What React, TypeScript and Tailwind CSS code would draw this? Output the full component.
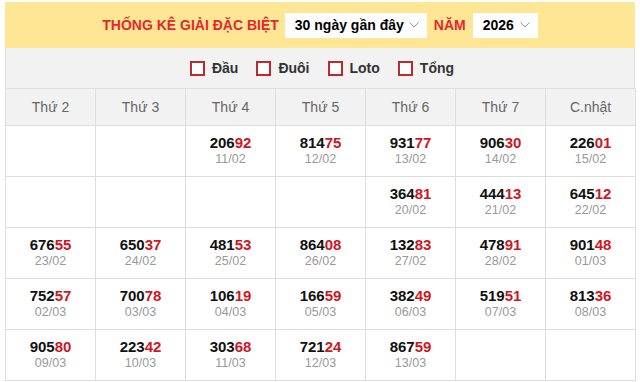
import React from 'react';

interface Prize {
  num: string;
  date: string;
}

const days = ['Thứ 2', 'Thứ 3', 'Thứ 4', 'Thứ 5', 'Thứ 6', 'Thứ 7', 'C.nhật'];

const rows: (Prize | null)[][] = [
  [null, null, { num: '20692', date: '11/02' }, { num: '81475', date: '12/02' }, { num: '93177', date: '13/02' }, { num: '90630', date: '14/02' }, { num: '22601', date: '15/02' }],
  [null, null, null, null, { num: '36481', date: '20/02' }, { num: '44413', date: '21/02' }, { num: '64512', date: '22/02' }],
  [{ num: '67655', date: '23/02' }, { num: '65037', date: '24/02' }, { num: '48153', date: '25/02' }, { num: '86408', date: '26/02' }, { num: '13283', date: '27/02' }, { num: '47891', date: '28/02' }, { num: '90148', date: '01/03' }],
  [{ num: '75257', date: '02/03' }, { num: '70078', date: '03/03' }, { num: '10619', date: '04/03' }, { num: '16659', date: '05/03' }, { num: '38249', date: '06/03' }, { num: '51951', date: '07/03' }, { num: '81336', date: '08/03' }],
  [{ num: '90580', date: '09/03' }, { num: '22342', date: '10/03' }, { num: '30368', date: '11/03' }, { num: '72124', date: '12/03' }, { num: '86759', date: '13/03' }, null, null],
];

const Chevron: React.FC = () => (
  <svg width="10" height="6" viewBox="0 0 10 6" className="shrink-0">
    <polyline points="0.5,0.5 5,5 9.5,0.5" fill="none" stroke="#9a9a9a" strokeWidth="1" />
  </svg>
);

const Check: React.FC<{ label: string }> = ({ label }) => (
  <label className="flex items-center gap-[7px]">
    <span className="w-[15px] h-[15px] border-2 border-[#c1272d] bg-white" />
    <span className="text-[14px] font-bold text-[#333]">{label}</span>
  </label>
);

const App: React.FC = () => {
  return (
    <div className="pt-[2px] pl-[5px] font-['Liberation_Sans',Arial,sans-serif] bg-white">
      <div className="w-[630px]">
        <div className="h-[46px] bg-[#fee695] flex items-center justify-center">
          <span className="text-[14px] font-bold text-[#e8262c] mr-[6px]">THỐNG KÊ GIẢI ĐẶC BIỆT</span>
          <div className="w-[142px] h-[25px] bg-white flex items-center justify-between pl-[10px] pr-[8px]">
            <span className="text-[14px] font-bold text-black">30 ngày gần đây</span>
            <Chevron />
          </div>
          <span className="text-[14px] font-bold text-[#e8262c] mx-[7px]">NĂM</span>
          <div className="w-[65px] h-[25px] bg-white flex items-center justify-between pl-[10px] pr-[8px]">
            <span className="text-[14px] font-bold text-black">2026</span>
            <Chevron />
          </div>
        </div>
        <div className="h-[40px] bg-[#f2f2f2] border-x border-[#dddddd] flex items-center justify-center gap-[18px] pl-[4px]">
          <Check label="Đầu" />
          <Check label="Đuôi" />
          <Check label="Loto" />
          <Check label="Tổng" />
        </div>
        <table className="w-[631px] border-collapse table-fixed">
          <thead>
            <tr className="h-[37px] bg-[#f2f2f2]">
              {days.map((d) => (
                <th key={d} className="border border-[#dddddd] text-[14px] font-normal text-[#666]">
                  {d}
                </th>
              ))}
            </tr>
          </thead>
          <tbody>
            {rows.map((row, i) => (
              <tr key={i} className="h-[51px]">
                {row.map((p, j) => (
                  <td key={j} className="border border-[#dddddd] text-center align-middle p-0">
                    {p && (
                      <div className="flex flex-col items-center">
                        <span className="text-[15px] font-bold leading-[16px] text-[#111]">
                          {p.num.slice(0, 3)}
                          <span className="text-[#d0161f]">{p.num.slice(3)}</span>
                        </span>
                        <span className="text-[12.5px] leading-[16px] text-[#999]">{p.date}</span>
                      </div>
                    )}
                  </td>
                ))}
              </tr>
            ))}
          </tbody>
        </table>
      </div>
    </div>
  );
};

export default App;
